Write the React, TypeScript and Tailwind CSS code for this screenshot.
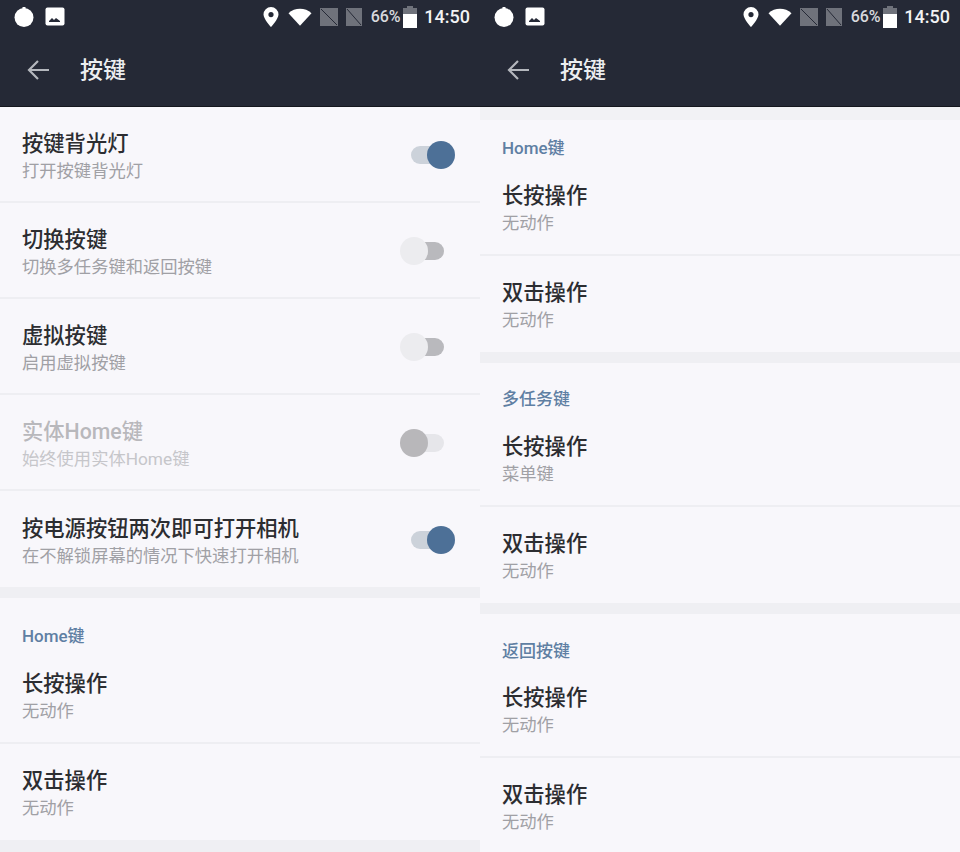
import React from "react";

const font = { fontFamily: 'Roboto, "Noto Sans CJK SC", sans-serif' };

function StatusBar() {
  return (
    <div className="h-[34px] flex items-center pl-[14px] pr-[10px] text-white" style={font}>
      <svg width="20" height="20" viewBox="0 0 20 20"><circle cx="10" cy="10.5" r="9.5" fill="#fff" /><path d="M8.5 0h3v3h-3z" fill="#fff" /></svg>
      <svg className="ml-[11px]" width="20" height="20" viewBox="0 0 20 20"><rect x="0.5" y="0.5" width="19" height="18" rx="2" fill="#fff" /><path d="M4 14l3-3 2 2 2-2 4 3v1H4z" fill="#252936" /></svg>
      <div className="flex-1" />
      <svg width="16" height="20" viewBox="0 0 16 20"><path fillRule="evenodd" d="M8 0a7.5 7.5 0 0 1 7.5 7.5C15.5 12 8 20 8 20S.5 12 .5 7.5A7.5 7.5 0 0 1 8 0zm0 5a2.6 2.6 0 1 0 0 5.2A2.6 2.6 0 0 0 8 5z" fill="#fff" /></svg>
      <svg className="ml-[9px]" width="24" height="20" viewBox="0 0 25 20"><path d="M0.5 6C7 0 18 0 24.5 6L12.5 19z" fill="#fff" /></svg>
      <svg className="ml-[8px]" width="18" height="18" viewBox="0 0 18 18"><path d="M0 0h18v18H0z" fill="#6f727b" /><path d="M1 1l16 16" stroke="#252936" strokeWidth="1" /></svg>
      <svg className="ml-[8px]" width="16" height="18" viewBox="0 0 16 18"><path d="M0 0h16v18H0z" fill="#6f727b" /><path d="M1 1l14 16" stroke="#252936" strokeWidth="1" /></svg>
      <span className="ml-[9px] text-[16px] leading-[20px] font-medium tracking-[-0.1px] text-[#d8d9dd]">66%</span>
      <svg className="ml-[3px]" width="14" height="22" viewBox="0 0 14 22"><path d="M4 0h6v2h4v20H0V2h4z" fill="#6f727b" /><path d="M0 8h14v14H0z" fill="#fff" /></svg>
      <span className="ml-[7px] text-[18px] leading-[20px] font-medium text-[#f2f3f4]">14:50</span>
    </div>
  );
}

function Header() {
  return (
    <div className="h-[107px] shrink-0 bg-[#252936] border-b border-[#15171e]">
      <StatusBar />
      <div className="h-[72px] flex items-center pl-[26px]">
        <svg width="24" height="22" viewBox="0 0 24 22" fill="none" stroke="#b4b7bd" strokeWidth="2.2"><path d="M23 11H3M12 2l-9 9 9 9" /></svg>
        <span className="ml-[30px] pt-[2px] text-[23px] leading-[30px] font-medium text-[#eceef0]" style={font}>按键</span>
      </div>
    </div>
  );
}

function Toggle({ on, disabled }: { on: boolean; disabled?: boolean }) {
  const track = disabled ? "bg-[#e6e6ea]" : on ? "bg-[#ccd2da]" : "bg-[#b9b9bd]";
  const knob = disabled ? "bg-[#b8b7ba]" : on ? "bg-[#4d7097]" : "bg-[#ececef]";
  return (
    <div className={`relative w-[44px] h-[28px] mt-[2px] shrink-0 ${on ? "mr-[25px]" : "mr-[36px]"}`}>
      <div className={`absolute top-[5px] w-[30px] h-[18px] rounded-full ${track} ${on ? "left-[0px]" : "left-[14px]"}`} />
      <div className={`absolute top-0 w-[28px] h-[28px] rounded-full ${knob} ${on ? "right-0" : "left-0"}`} />
    </div>
  );
}

function Row({ title, sub, toggle, disabled, border = true, pt = "pt-[4px]" }: { title: string; sub: string; toggle?: "on" | "off"; disabled?: boolean; border?: boolean; pt?: string }) {
  return (
    <div className={`h-[96px] shrink-0 flex items-center pl-[22px] ${border ? "border-b-2 border-[#eeeef2]" : ""}`}>
      <div className={`flex-1 min-w-0 flex flex-col gap-[2px] ${pt}`} style={font}>
        <div className={`text-[21.3px] leading-[28px] font-medium ${disabled ? "text-[#b8b8bc]" : "text-[#2c2d31]"}`}>{title}</div>
        <div className={`text-[17.3px] leading-[22px] ${disabled ? "text-[#c6c6ca]" : "text-[#a0a0a5]"}`}>{sub}</div>
      </div>
      {toggle && <Toggle on={toggle === "on"} disabled={disabled} />}
    </div>
  );
}

function SectionTitle({ children, h }: { children: React.ReactNode; h: string }) {
  return (
    <div className={`${h} shrink-0 flex items-end pl-[22px] text-[17px] leading-[22px] font-medium text-[#5f7fa3]`} style={font}>
      {children}
    </div>
  );
}

function Strip({ h }: { h: string }) {
  return <div className={`${h} shrink-0 bg-[#efeff3]`} />;
}

function Pair({ sub1, sub2 }: { sub1: string; sub2: string }) {
  return (
    <>
      <Row title="长按操作" sub={sub1} pt="pt-[2px]" />
      <Row title="双击操作" sub={sub2} pt="pt-[2px]" border={false} />
    </>
  );
}

export default function App() {
  return (
    <div className="w-[960px] h-[852px] overflow-hidden flex bg-[#f8f7fb]">
      <div className="w-[480px] h-full flex flex-col overflow-hidden">
        <Header />
        <Row title="按键背光灯" sub="打开按键背光灯" toggle="on" />
        <Row title="切换按键" sub="切换多任务键和返回按键" toggle="off" />
        <Row title="虚拟按键" sub="启用虚拟按键" toggle="off" />
        <Row title="实体Home键" sub="始终使用实体Home键" toggle="off" disabled />
        <Row title="按电源按钮两次即可打开相机" sub="在不解锁屏幕的情况下快速打开相机" toggle="on" border={false} />
        <Strip h="h-[11px]" />
        <SectionTitle h="h-[50px] pb-[1px]">Home键</SectionTitle>
        <Pair sub1="无动作" sub2="无动作" />
        <Strip h="h-[12px]" />
      </div>
      <div className="w-[480px] h-full flex flex-col overflow-hidden">
        <Header />
        <div className="h-[13px] shrink-0 bg-[#f2f2f5]" />
        <SectionTitle h="h-[40px] pb-[1px]">Home键</SectionTitle>
        <Pair sub1="无动作" sub2="无动作" />
        <Strip h="h-[11px]" />
        <SectionTitle h="h-[48px] pb-[1px]">多任务键</SectionTitle>
        <Pair sub1="菜单键" sub2="无动作" />
        <Strip h="h-[11px]" />
        <SectionTitle h="h-[48px]">返回按键</SectionTitle>
        <Pair sub1="无动作" sub2="无动作" />
      </div>
    </div>
  );
}
